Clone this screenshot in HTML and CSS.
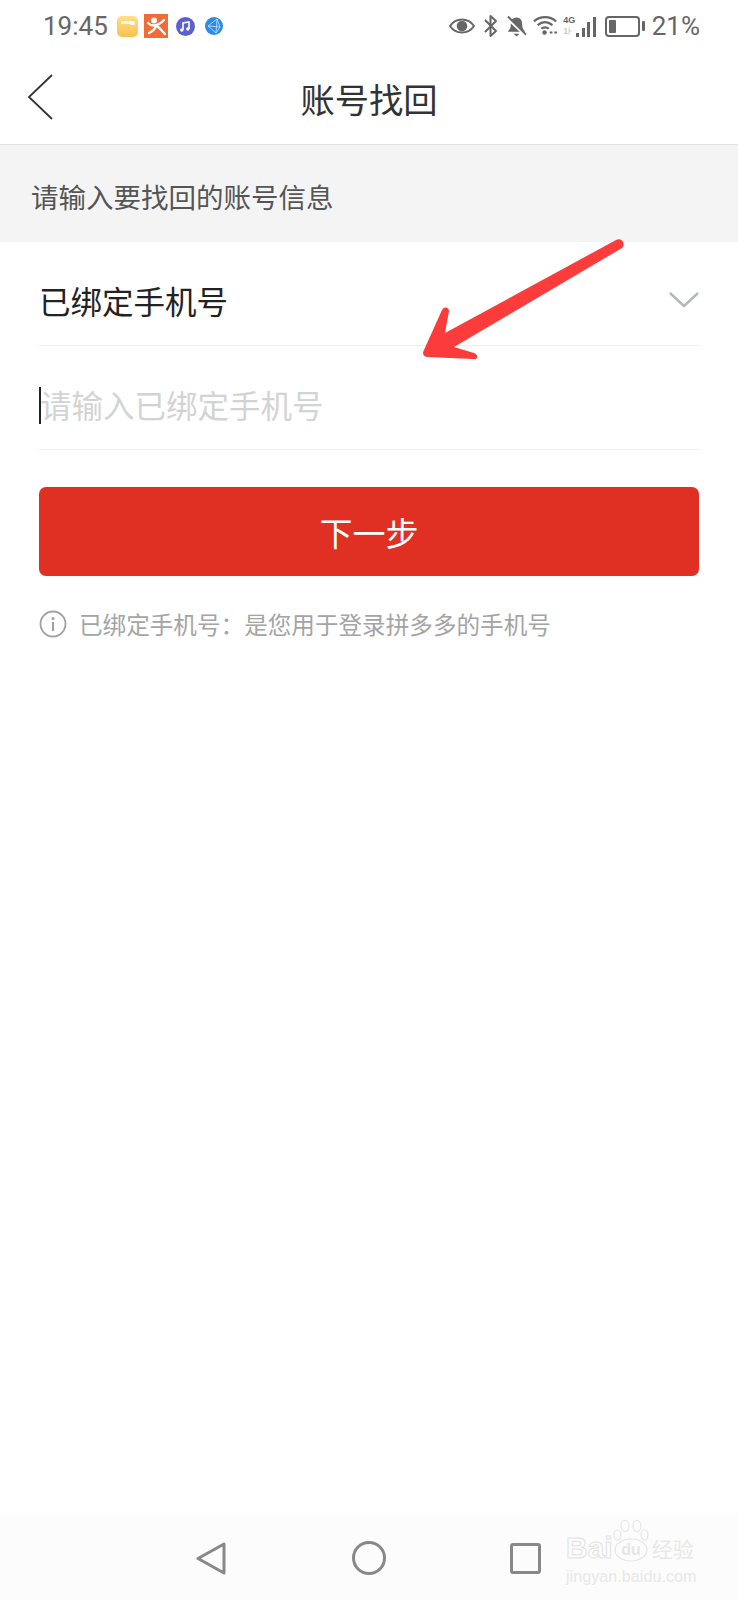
FILE: index.html
```html
<!DOCTYPE html>
<html lang="zh-CN">
<head>
  <meta charset="UTF-8">
  <meta name="viewport" content="width=device-width, initial-scale=1.0">
  <title>账号找回</title>
  <link rel="stylesheet" href="styles.css">
</head>
<body>
  <div class="screen">
    <!-- Status bar -->
    <div class="status-bar">
      <div class="status-left">
        <span class="clock">19:45</span>
        <svg class="wallet" width="21" height="21" viewBox="0 0 21 21">
          <defs><linearGradient id="wallet" x1="0" y1="0" x2="0" y2="1"><stop offset="0" stop-color="#fbe08c"/><stop offset="1" stop-color="#fbc04e"/></linearGradient></defs>
          <rect width="21" height="21" rx="5" fill="url(#wallet)"/>
          <rect x="4" y="5" width="13" height="3" fill="#fff" opacity=".8"/>
          <rect x="13" y="6" width="5" height="3" rx="1.5" fill="#fff"/>
        </svg>
        <svg class="person" width="24" height="24" viewBox="0 0 24 24">
          <rect width="24" height="24" fill="#f26a35"/>
          <circle cx="10" cy="6.5" r="3" fill="#fff"/>
          <path d="M4 9 C7 12 10 12 13 11 C16 10 18 8 20 6 M12 12 C11 15 9 17 5 19 M13 12 C16 14 18 17 21 20" fill="none" stroke="#fff" stroke-width="2.4" stroke-linecap="round"/>
        </svg>
        <svg class="music" width="19" height="19" viewBox="0 0 19 19">
          <circle cx="9.5" cy="9.5" r="9.5" fill="#5b60cf"/>
          <path d="M7 13 V6 L13 5 V12" fill="none" stroke="#fff" stroke-width="1.6"/>
          <circle cx="5.8" cy="13" r="1.7" fill="#fff"/>
          <circle cx="11.8" cy="12" r="1.7" fill="#fff"/>
        </svg>
        <svg width="18" height="18" viewBox="0 0 18 18">
          <circle cx="9" cy="9" r="9" fill="#2c8be6"/>
          <path d="M12 2 L3 9 L11 16 M12 2 L15 10 L11 16 M12 2 L11 16 M3 9 L15 10" fill="none" stroke="#cfe6fb" stroke-width=".8"/>
        </svg>
      </div>
      <div class="status-right">
        <svg class="eye" width="26" height="18" viewBox="0 0 27 18">
          <path d="M1 9 C7 0 20 0 26 9 C20 18 7 18 1 9 Z" fill="none" stroke="#666" stroke-width="2"/>
          <circle cx="13.5" cy="9" r="5.5" fill="#666"/>
        </svg>
        <svg class="bluetooth" width="15" height="24" viewBox="0 0 15 24">
          <path d="M2 6 L13 17 L7.5 22 V2 L13 7 L2 18" fill="none" stroke="#666" stroke-width="2" stroke-linejoin="round"/>
        </svg>
        <svg class="bell" width="21" height="23" viewBox="0 0 22 23">
          <path d="M11 2 C6 2 5 6 5 10 C5 14 3 15 2 17 H20 C19 15 17 14 17 10 C17 6 16 2 11 2 Z" fill="#666"/>
          <path d="M8 19 H14 L11 22 Z" fill="#666"/>
          <path d="M1 2 L21 21" stroke="#fff" stroke-width="3.4"/>
          <path d="M2 1 L21 20" stroke="#666" stroke-width="2"/>
        </svg>
        <svg class="wifi" width="25" height="22" viewBox="0 0 27 22">
          <path d="M1 6 C8 0 18 0 25 6 M5 10 C10 6 16 6 21 10 M9 14 C11 12 15 12 17 14" fill="none" stroke="#666" stroke-width="2.4"/>
          <circle cx="12.5" cy="18" r="2.4" fill="#666"/>
          <path d="M18 18 H21 M23 18 H26" stroke="#666" stroke-width="2"/>
        </svg>
        <div class="signal">
          <div class="net-type"><span>4G</span><span class="sim-two">1⊦</span></div>
          <div class="bars"><i class="b1"></i><i class="b2"></i><i class="b3"></i><i class="b4"></i></div>
        </div>
        <div class="battery"><div class="battery-body"><div class="battery-level"></div></div><div class="battery-cap"></div></div>
        <span class="percent">21%</span>
      </div>
    </div>

    <!-- Title bar -->
    <div class="title-bar">
      <svg class="back" width="26" height="46" viewBox="0 0 26 46">
        <path d="M25 1 L2 23 L25 45" fill="none" stroke="#333" stroke-width="1.8"/>
      </svg>
      <h1>账号找回</h1>
    </div>

    <div class="section-label">请输入要找回的账号信息</div>

    <div class="form">
      <div class="select-row">
        <span>已绑定手机号</span>
        <svg width="32" height="18" viewBox="0 0 32 18">
          <path d="M2 2 L16 15 L30 2" fill="none" stroke="#b4b8b8" stroke-width="2.4"/>
        </svg>
      </div>
      <div class="input-row">
        <span class="caret"></span>
        <span class="placeholder">请输入已绑定手机号</span>
      </div>
      <button class="next-btn">下一步</button>
      <div class="hint">
        <svg width="28" height="28" viewBox="0 0 28 28">
          <circle cx="14" cy="14" r="12.5" fill="none" stroke="#a0a0a0" stroke-width="1.8"/>
          <circle cx="14" cy="8.5" r="1.5" fill="#a0a0a0"/>
          <path d="M14 12 V21" stroke="#a0a0a0" stroke-width="2"/>
        </svg>
        <span>已绑定手机号：是您用于登录拼多多的手机号</span>
      </div>
    </div>

    <!-- Annotation drawn over the form -->
    <svg class="arrow" width="210" height="130" viewBox="0 0 210 130">
      <path d="M197 3 C203 0 207 7 203 11 L35 110 L55 116 C60 118 59 123 54 122 L9 120 C4 120 3 116 5 113 L23 73 C25 69 30 70 30 74 L26 96 Z" fill="#fb3c3a"/>
    </svg>

    <!-- Navigation bar -->
    <div class="nav-bar">
      <svg class="nav-back" width="30" height="33" viewBox="0 0 30 33">
        <path d="M28 2 V31 L2 16.5 Z" fill="none" stroke="#888" stroke-width="3" stroke-linejoin="round"/>
      </svg>
      <svg class="nav-home" width="34" height="34" viewBox="0 0 34 34">
        <circle cx="17" cy="17" r="15.5" fill="none" stroke="#888" stroke-width="3"/>
      </svg>
      <svg width="31" height="31" viewBox="0 0 31 31">
        <rect x="1.5" y="1.5" width="28" height="28" rx="1.5" fill="none" stroke="#888" stroke-width="3"/>
      </svg>
    </div>
    <div class="watermark">
      <div class="wm-logo">
        <span class="wm-bai">Bai</span>
        <svg width="36" height="42" viewBox="0 0 36 42">
          <g fill="none" stroke="#e6e6e6" stroke-width="1.2">
            <ellipse cx="4.5" cy="15" rx="3.5" ry="5"/>
            <ellipse cx="12" cy="6" rx="4" ry="5.5"/>
            <ellipse cx="24" cy="6" rx="4" ry="5.5"/>
            <ellipse cx="31.5" cy="15" rx="3.5" ry="5"/>
            <ellipse cx="18" cy="30" rx="16" ry="11"/>
          </g>
          <text x="18" y="35" text-anchor="middle" class="wm-du">du</text>
        </svg>
        <span class="wm-cn">经验</span>
      </div>
      <div class="wm-url">jingyan.baidu.com</div>
    </div>
  </div>
</body>
</html>
```

FILE: styles.css
```css
/* Page */
html, body {
  margin: 0;
  padding: 0;
  background: #fff;
}
.screen {
  position: relative;
  width: 738px;
  height: 1600px;
  overflow: hidden;
  display: flex;
  flex-direction: column;
  font-family: "Noto Sans CJK SC", "Noto Sans", sans-serif;
  color: #333;
}

/* Status bar */
.status-bar {
  height: 52px;
  display: flex;
  justify-content: space-between;
  align-items: center;
  padding: 0 38px 0 43px;
  color: #666;
}
.status-left, .status-right {
  display: flex;
  align-items: center;
}
.clock, .percent {
  font-family: Roboto, sans-serif;
  font-size: 26px;
}
.clock { margin-right: 9px; }
.wallet { margin-right: 6px; }
.person { margin-right: 8px; }
.music { margin-right: 10px; }
.eye { margin-right: 8px; }
.bluetooth { margin-right: 8px; }
.bell { margin-right: 6px; }
.wifi { margin-right: 5px; }
.signal {
  display: flex;
  align-items: flex-end;
  gap: 1px;
  height: 22px;
  margin-right: 9px;
}
.net-type {
  display: flex;
  flex-direction: column;
  font-family: "Liberation Sans", sans-serif;
  font-size: 9px;
  font-weight: bold;
  line-height: 11px;
}
.sim-two {
  color: #ccc;
}
.bars {
  display: flex;
  align-items: flex-end;
  gap: 2.5px;
}
.bars i {
  width: 3px;
  background: #666;
}
.bars .b1 { height: 4px; }
.bars .b2 { height: 9px; }
.bars .b3 { height: 15px; }
.bars .b4 { height: 20px; }
.battery {
  display: flex;
  align-items: center;
  gap: 2px;
}
.battery-body {
  width: 27px;
  height: 13px;
  border: 2px solid #666;
  border-radius: 4px;
  padding: 2px;
}
.battery-level {
  width: 7px;
  height: 100%;
  background: #666;
  border-radius: 1px;
}
.battery-cap {
  width: 3px;
  height: 10px;
  background: #666;
  border-radius: 1px;
}
.percent {
  margin-left: 7px;
}

/* Title bar */
.title-bar {
  height: 92px;
  position: relative;
  display: flex;
  align-items: center;
  justify-content: center;
  border-bottom: 1px solid #e0e0e0;
}
.title-bar h1 {
  margin: 0;
  font-size: 34.3px;
  font-weight: 400;
  color: #333;
}
.back {
  position: absolute;
  left: 27px;
  top: 22px;
}

.section-label {
  height: 97px;
  box-sizing: border-box;
  padding: 4px 0 0 31px;
  display: flex;
  align-items: center;
  background: #f4f4f4;
  font-size: 27.5px;
  color: #555;
}

/* Form */
.form {
  padding: 0 39px;
  display: flex;
  flex-direction: column;
}
.select-row {
  height: 104px;
  box-sizing: border-box;
  display: flex;
  align-items: center;
  justify-content: space-between;
  padding-top: 13px;
  border-bottom: 1px solid #eee;
  font-size: 31.5px;
  color: #222;
}
.select-row svg {
  margin-right: -1px;
}
.input-row {
  height: 104px;
  box-sizing: border-box;
  display: flex;
  align-items: center;
  padding-top: 16px;
  border-bottom: 1px solid #eee;
  font-size: 31.5px;
}
.caret {
  width: 2px;
  height: 37px;
  background: #222;
  margin-right: -1px;
}
.placeholder {
  color: #d2d4d4;
  margin-top: -3px;
}
.next-btn {
  margin-top: 37px;
  height: 89px;
  border: 0;
  border-radius: 7px;
  background: #e03024;
  color: #fff;
  font-family: inherit;
  font-size: 33px;
}
.hint {
  margin-top: 31px;
  display: flex;
  align-items: center;
  gap: 12px;
  font-size: 23.6px;
  color: #a4a4a4;
}

.arrow {
  position: absolute;
  left: 419px;
  top: 237px;
}

/* Navigation bar */
.nav-bar {
  position: absolute;
  left: 0;
  right: 0;
  bottom: 0;
  height: 86px;
  box-sizing: border-box;
  background: #fcfcfc;
  display: flex;
  align-items: center;
  padding: 2px 0 0 196px;
}
.nav-back { margin-right: 126px; }
.nav-home { margin-right: 124px; }

/* Watermark */
.watermark {
  position: absolute;
  left: 566px;
  top: 1520px;
  width: 131px;
  font-family: "Liberation Sans", sans-serif;
}
.wm-logo {
  height: 42px;
  display: flex;
  align-items: flex-end;
  white-space: nowrap;
}
.wm-bai {
  font-size: 30px;
  font-weight: bold;
  line-height: 28px;
  color: #fcfcfc;
  -webkit-text-stroke: 1px #e2e2e2;
}
.wm-du {
  font-family: "Liberation Sans", sans-serif;
  font-size: 16px;
  font-weight: bold;
  fill: #e6e6e6;
}
.wm-cn {
  font-family: "Noto Sans CJK SC", sans-serif;
  font-size: 21px;
  line-height: 28px;
  margin-left: 3px;
  color: #e8e8e8;
}
.wm-url {
  margin-top: 6px;
  font-size: 16.2px;
  line-height: 16px;
  white-space: nowrap;
  color: #e8e8e8;
}
```
